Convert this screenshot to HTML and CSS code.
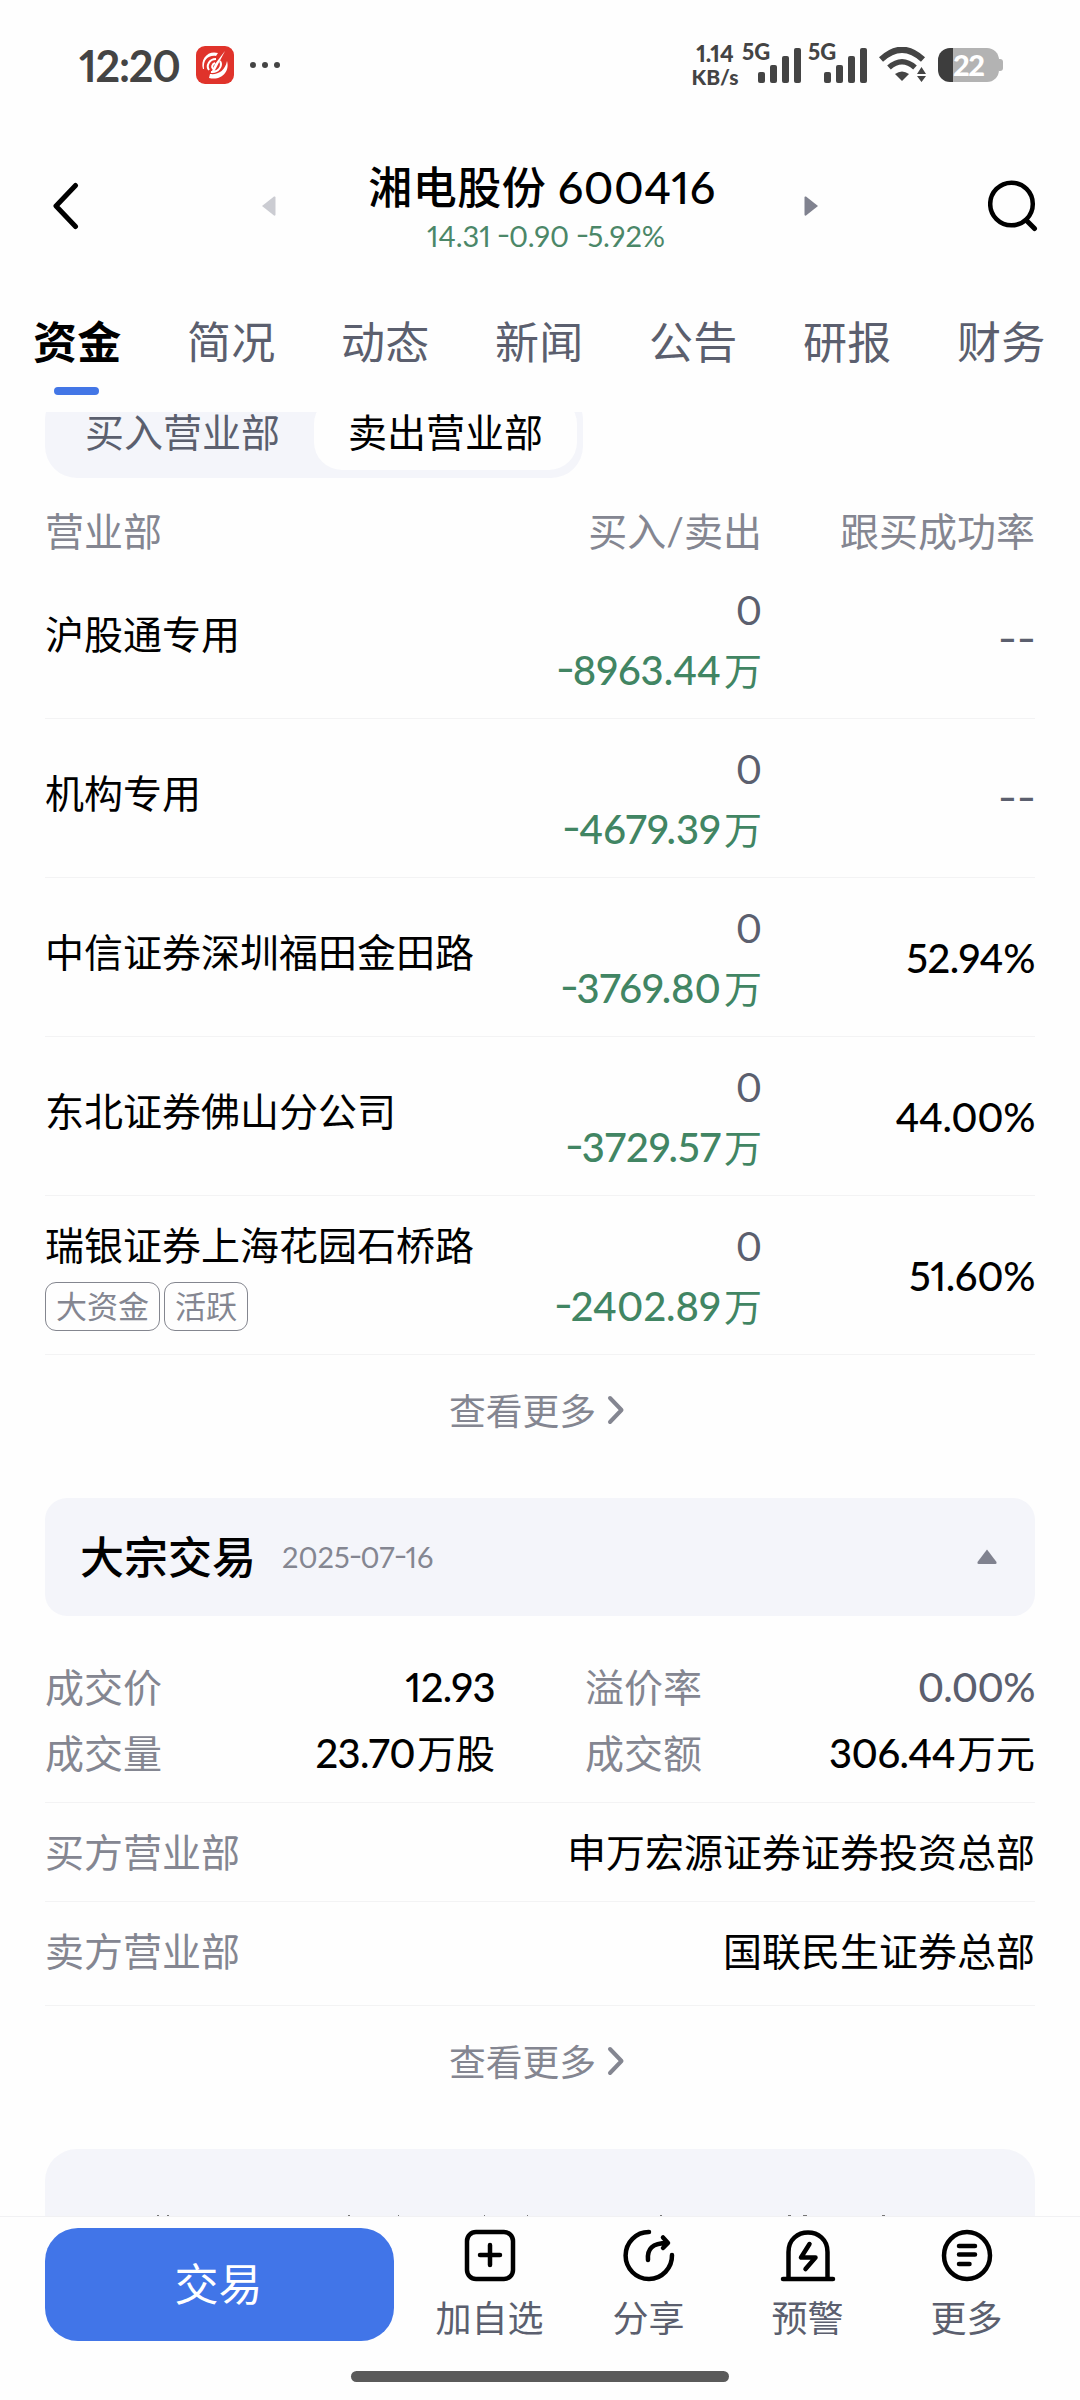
FILE: index.html
```html
<!DOCTYPE html>
<html lang="zh-CN">
<head>
  <meta charset="UTF-8" />
  <meta name="viewport" content="width=device-width, initial-scale=1" />
  <title>湘电股份 600416</title>
  <link rel="stylesheet" href="styles.css">
</head>
<body>
  <div class="statusbar">
    <span class="time">12:20</span>
    <svg class="app-logo" width="38" height="38" viewBox="0 0 38 38">
      <rect width="38" height="38" rx="9" fill="#e0332b" />
      <path d="M7 23C4 13 12 4 22 7L20 10C12 9 7 14 8 23Z" fill="#fff" />
      <path d="M31 15C34 25 26 35 13 32L14 28C22 29 29 25 31 15Z" fill="#fff" />
      <path d="M29 5L18 26L16 25L19 18Z" fill="#fff" />
      <path d="M20 13C13 13 10 20 13 24M24 15C27 20 22 27 15 26M19 17C16 18 15 22 18 23" fill="none" stroke="#fff" stroke-width="2" />
    </svg>
    <span class="dots"><i></i><i></i><i></i></span>
    <div class="status-right">
      <div class="speed"><b>1.14</b><b>KB/s</b></div>
      <div class="signal">
        <b>5G</b>
        <svg width="44" height="35" viewBox="0 0 44 35" fill="#444">
          <rect x="0" y="24" width="7" height="11" rx="2" />
          <rect x="12" y="17" width="7" height="18" rx="2" />
          <rect x="24" y="8" width="7" height="27" rx="2" />
          <rect x="36" y="0" width="7" height="35" rx="2" />
        </svg>
      </div>
      <div class="signal">
        <b>5G</b>
        <svg width="44" height="35" viewBox="0 0 44 35" fill="#444">
          <rect x="0" y="24" width="7" height="11" rx="2" />
          <rect x="12" y="17" width="7" height="18" rx="2" />
          <rect x="24" y="8" width="7" height="27" rx="2" />
          <rect x="36" y="0" width="7" height="35" rx="2" />
        </svg>
      </div>
      <svg class="wifi" width="48" height="36" viewBox="0 0 48 36">
        <path d="M2 12.500Q23 -7 44 12.500" fill="none" stroke="#444" stroke-width="6" />
        <path d="M10 20.500Q23 9 36 20.500" fill="none" stroke="#444" stroke-width="5.500" />
        <path d="M16 27Q23 22 30 27L23 34Z" fill="#444" />
        <path d="M42.500 20L47 27H38ZM42.500 35L47 29H38Z" fill="#444" />
      </svg>
      <div class="battery"><span>22</span></div>
    </div>
  </div>

  <header class="header">
    <svg class="back" width="26" height="48" viewBox="0 0 26 48">
      <path d="M22.500 3.500L3 24L22.500 44.500" fill="none" stroke="#000" stroke-width="5" stroke-linecap="round" stroke-linejoin="round" />
    </svg>
    <svg width="14" height="20" viewBox="0 0 14 20"><path d="M0 10L12 0.500Q13.500 0 13.500 1.500V18.500Q13.500 20 12 19.500Z" fill="#cbccd2" /></svg>
    <div class="title">
      <h1>湘电股份 <span>600416</span></h1>
      <p>14.31 <i>-</i>0.90 <i>-</i>5.92%</p>
    </div>
    <svg width="14" height="20" viewBox="0 0 14 20"><path d="M14 10L2 0.500Q0.500 0 0.500 1.500V18.500Q0.500 20 2 19.500Z" fill="#80828f" /></svg>
    <svg class="search" width="50" height="52" viewBox="0 0 50 52">
      <circle cx="23.500" cy="24" r="21.300" fill="none" stroke="#000" stroke-width="4.500" />
      <path d="M38.500 40.500L46.500 48.500" stroke="#000" stroke-width="5" stroke-linecap="round" />
    </svg>
  </header>

  <nav class="tabs">
    <a class="active">资金</a>
    <a>简况</a>
    <a>动态</a>
    <a>新闻</a>
    <a>公告</a>
    <a>研报</a>
    <a>财务</a>
  </nav>

  <main class="content">
    <div class="segment">
      <span>买入营业部</span>
      <span class="on">卖出营业部</span>
    </div>

    <div class="row row-head">
      <span>营业部</span>
      <span>买入/卖出</span>
      <span>跟买成功率</span>
    </div>
    <div class="row">
      <div class="name">沪股通专用</div>
      <div class="amount"><span>0</span><em><i>-</i>8963.44<u>万</u></em></div>
      <div class="rate none"><i>-</i><i>-</i></div>
    </div>
    <div class="row">
      <div class="name">机构专用</div>
      <div class="amount"><span>0</span><em><i>-</i>4679.39<u>万</u></em></div>
      <div class="rate none"><i>-</i><i>-</i></div>
    </div>
    <div class="row">
      <div class="name">中信证券深圳福田金田路</div>
      <div class="amount"><span>0</span><em><i>-</i>3769.80<u>万</u></em></div>
      <div class="rate">52.94%</div>
    </div>
    <div class="row">
      <div class="name">东北证券佛山分公司</div>
      <div class="amount"><span>0</span><em><i>-</i>3729.57<u>万</u></em></div>
      <div class="rate">44.00%</div>
    </div>
    <div class="row">
      <div class="name tagged">瑞银证券上海花园石桥路
        <div class="tags"><span>大资金</span><span>活跃</span></div>
      </div>
      <div class="amount"><span>0</span><em><i>-</i>2402.89<u>万</u></em></div>
      <div class="rate">51.60%</div>
    </div>
    <div class="more"><span>查看更多</span>
      <svg width="18" height="30" viewBox="0 0 18 30"><path d="M3 3L14.500 15L3 27" fill="none" stroke="#848691" stroke-width="4" stroke-linecap="round" stroke-linejoin="round" /></svg>
    </div>

    <div class="card-head">
      <h2>大宗交易</h2>
      <span class="date">2025<i>-</i>07<i>-</i>16</span>
      <svg width="20" height="16" viewBox="0 0 20 16"><path d="M10 0.500L19.500 13Q20 15 18.500 15H1.500Q0 15 0.500 13Z" fill="#80828f" /></svg>
    </div>
    <div class="stats">
      <div><label>成交价</label><span>12.93</span></div>
      <div><label>溢价率</label><span class="flat">0.00%</span></div>
      <div><label>成交量</label><span>23.70<u>万股</u></span></div>
      <div><label>成交额</label><span>306.44<u>万元</u></span></div>
    </div>
    <div class="party"><label>买方营业部</label><span>申万宏源证券证券投资总部</span></div>
    <div class="party last"><label>卖方营业部</label><span>国联民生证券总部</span></div>
    <div class="more"><span>查看更多</span>
      <svg width="18" height="30" viewBox="0 0 18 30"><path d="M3 3L14.500 15L3 27" fill="none" stroke="#848691" stroke-width="4" stroke-linecap="round" stroke-linejoin="round" /></svg>
    </div>

    <!-- next card, only its top edge shows above the action bar -->
    <div class="next-card">
      <svg width="990" height="2" viewBox="0 0 990 2">
        <path d="M112 1h2M122 1h2M303 1h2M353 1h1M439 1h1M482 1h1M615 1h2M743 1h3M758 1h4M837 1h3" stroke="#777" stroke-width="2" />
      </svg>
    </div>
  </main>

  <footer class="actionbar">
    <button>交易</button>
    <div class="action">
      <svg width="54" height="54" viewBox="0 0 54 54" fill="none" stroke="#000" stroke-width="4.500" stroke-linecap="round">
        <rect x="4" y="4" width="46" height="47" rx="9" />
        <path d="M27 17V37M17 27H37" />
      </svg>
      <span>加自选</span>
    </div>
    <div class="action">
      <svg width="54" height="54" viewBox="0 0 54 54" fill="none" stroke="#000" stroke-width="4.500" stroke-linecap="round" stroke-linejoin="round">
        <path d="M27 4A23.200 23.500 0 1 0 50 27" />
        <path d="M26 32C25 21 30 15 45.500 15M41 9.500L46 15L41 20" />
      </svg>
      <span>分享</span>
    </div>
    <div class="action">
      <svg width="58" height="54" viewBox="0 0 58 54" fill="none" stroke="#000" stroke-width="4.500" stroke-linecap="round" stroke-linejoin="round">
        <path d="M4 51H54M9.500 51V24C9.500 -2 48.500 -2 48.500 24V51" />
        <path d="M30.500 16L22 29.500H36.500L26.500 41" />
      </svg>
      <span>预警</span>
    </div>
    <div class="action">
      <svg width="54" height="54" viewBox="0 0 54 54" fill="none" stroke="#000" stroke-width="4.500" stroke-linecap="round">
        <ellipse cx="27" cy="27.500" rx="23" ry="23.500" />
        <path d="M19 18H35M19 26.500H35M19 36H29.500" />
      </svg>
      <span>更多</span>
    </div>
    <div class="home"></div>
  </footer>
</body>
</html>
```

FILE: styles.css
```css
* {
  box-sizing: border-box;
}
body {
  margin: 0;
  width: 1080px;
  height: 2400px;
  overflow: hidden;
  display: flex;
  flex-direction: column;
  background: #fefefe;
  color: #000;
  font-family: Lato, "Noto Sans CJK SC", sans-serif;
  font-size: 39px;
  font-variant-numeric: proportional-nums;
}
h1, h2, p {
  margin: 0;
  font-weight: 500;
}
i, em {
  font-style: normal;
}
u {
  text-decoration: none;
  font-weight: 400;
}
svg {
  display: block;
  flex: none;
}

/* wide, slightly raised minus sign */
p i, em i, .date i, .none i {
  display: inline-block;
  transform: translateY(-2px) scaleX(1.3);
}

/* status bar */
.statusbar {
  height: 130px;
  flex: none;
  display: flex;
  align-items: center;
  padding: 0 81px 0 79px;
  color: #444;
}
.time {
  width: 117px;
  font-size: 43px;
  font-weight: bold;
  letter-spacing: -1.2px;
}
.dots {
  display: flex;
  gap: 6px;
  margin-left: 16px;
}
.dots i {
  width: 6px;
  height: 6px;
  border-radius: 50%;
  background: #444;
}
.status-right {
  display: flex;
  align-items: center;
  margin-left: auto;
}
.speed {
  width: 48px;
  display: flex;
  flex-direction: column;
  align-items: center;
  margin-right: 3px;
  font-size: 21px;
  line-height: 23px;
}
.speed b:first-child {
  font-size: 23px;
}
.speed b,
.signal b {
  font-weight: 900;
}
.signal {
  display: flex;
  align-items: flex-end;
}
.signal b {
  width: 28px;
  margin-right: -12px;
  font-size: 22px;
  line-height: 24px;
  align-self: flex-start;
  margin-top: -8px;
}
.signal + .signal {
  margin-left: 6px;
}
.wifi {
  margin-left: 11px;
}
.battery {
  position: relative;
  width: 61px;
  height: 34px;
  margin-left: 11px;
  border-radius: 12px;
  background: linear-gradient(to right, #3d3d3d 15px, #b3b3b3 15px);
  color: #fff;
  font-size: 29px;
  font-weight: 900;
  line-height: 34px;
  padding-left: 15px;
  letter-spacing: -1.5px;
}
.battery::after {
  content: "";
  position: absolute;
  right: -4px;
  top: 11px;
  width: 4px;
  height: 12px;
  border-radius: 0 3px 3px 0;
  background: #b3b3b3;
}

/* title */
.header {
  height: 152px;
  flex: none;
  display: flex;
  align-items: center;
  padding: 0 42px 0 53px;
}
.back {
  margin-right: 183px;
}
.title {
  flex: 1;
  text-align: center;
}
.title h1 {
  font-size: 44px;
  line-height: 58px;
  padding: 2px 0 0 4px;
  letter-spacing: 0.5px;
}
.title h1 span {
  font-size: 45px;
}
.title p {
  padding: 0 0 0 12px;
  font-size: 29px;
  font-weight: 400;
  line-height: 40px;
  color: #4b8768;
}
.search {
  margin-left: 170px;
}

/* tabs */
.tabs {
  height: 130px;
  flex: none;
  display: flex;
  gap: 65.4px;
  padding: 25px 0 0 33px;
}
.tabs a {
  font-size: 44px;
  line-height: 70px;
  color: #5b5f6e;
  letter-spacing: 0.3px;
}
.tabs .active {
  position: relative;
  color: #000;
  font-weight: bold;
}
.active::after {
  content: "";
  position: absolute;
  left: 21px;
  top: 80px;
  width: 45px;
  height: 8px;
  border-radius: 4px;
  background: #4376e6;
}

.content {
  flex: 1;
  overflow: hidden;
  padding: 0 45px;
}
.segment {
  width: 538px;
  height: 90px;
  margin-top: -24px;
  padding: 8px 6px 8px 6px;
  display: flex;
  border-radius: 32px;
  background: #f4f5fa;
  line-height: 73px;
  text-align: center;
  color: #5b5f6e;
}
.segment span {
  flex: 1;
}
.segment .on {
  flex: none;
  width: 263px;
  border-radius: 28px;
  background: #fefefe;
  color: #000;
}

/* broker table */
.row {
  height: 159px;
  display: grid;
  grid-template-columns: 450px 267px 1fr;
  align-items: center;
  border-bottom: 1px solid #f3f3f4;
}
.row-head {
  height: 82px;
  padding-top: 19px;
  border: 0;
  color: #848691;
}
.row-head span + span,
.rate,
.amount {
  text-align: right;
}
.name {
  padding-bottom: 15px;
}
.tagged {
  padding: 2px 0 0;
  line-height: 48px;
}
.tags {
  display: flex;
  gap: 4px;
  margin-top: 13px;
}
.tags span {
  height: 49px;
  padding: 0 10px;
  border: 1px solid #84868f;
  border-radius: 11px;
  font-size: 31px;
  line-height: 47px;
  color: #848691;
}
.amount {
  display: flex;
  flex-direction: column;
  padding-top: 2px;
  font-size: 40px;
  line-height: 60px;
}
.amount span {
  font-size: 40px;
  color: #5b5f6e;
}
.amount em {
  color: #418563;
  font-weight: 500;
}
.amount u {
  margin-left: 3px;
  font-size: 38px;
}
.rate {
  padding-top: 2px;
  font-size: 40px;
  font-weight: 500;
  letter-spacing: -0.4px;
}
.none {
  color: #5b5f6e;
}
.none i {
  margin-right: 2px;
  margin-left: 2px;
}
.more {
  height: 143px;
  padding: 0 18px 33px 12px;
  display: flex;
  align-items: center;
  justify-content: center;
  gap: 11px;
  font-size: 36.8px;
  color: #848691;
}
.more span {
  padding-bottom: 2px;
}

/* block trades */
.card-head {
  height: 118px;
  display: flex;
  align-items: center;
  padding: 0 38px 0 35px;
  border-radius: 22px;
  background: #f4f5fa;
}
.card-head h2 {
  padding-bottom: 5px;
  font-size: 44px;
}
.date {
  flex: 1;
  margin-left: 26px;
  padding-bottom: 1px;
  font-size: 29px;
  color: #848691;
}
.stats {
  display: grid;
  grid-template-columns: 1fr 1fr;
  grid-auto-rows: 66px;
  align-content: start;
  column-gap: 90px;
  height: 187px;
  padding-top: 38px;
  border-bottom: 1px solid #f3f3f4;
}
.stats div {
  display: flex;
  justify-content: space-between;
  line-height: 66px;
}
label {
  color: #848691;
}
.stats span {
  font-size: 40px;
  font-weight: 500;
  letter-spacing: -0.6px;
}
.stats u {
  margin-left: 2px;
  font-size: 39px;
  letter-spacing: 0;
}
.stats .flat {
  color: #5b5f6e;
}
.party {
  height: 99px;
  padding-bottom: 5px;
  display: flex;
  align-items: center;
  justify-content: space-between;
  border-bottom: 1px solid #f3f3f4;
}
.party.last {
  height: 104px;
  padding-bottom: 10px;
}
.next-card {
  height: 200px;
  padding-top: 66px;
  border-radius: 32px;
  background: #f4f5fa;
}

/* bottom bar */
.actionbar {
  position: relative;
  height: 184px;
  flex: none;
  display: flex;
  padding: 11px 34px 0 45px;
  border-top: 1px solid #f1f1f3;
}
.actionbar button {
  width: 349px;
  height: 113px;
  margin-right: 16px;
  padding: 0 2px 6px 0;
  border: 0;
  border-radius: 33px;
  background: #4175e8;
  color: #fff;
  font: inherit;
  font-size: 44px;
}
.action {
  width: 159px;
  display: flex;
  flex-direction: column;
  align-items: center;
  font-size: 36px;
  line-height: 50px;
  color: #5b5f6e;
}
.action span {
  margin-top: 11px;
}
.home {
  position: absolute;
  left: 351px;
  bottom: 18px;
  width: 378px;
  height: 11px;
  border-radius: 6px;
  background: #5a5a5a;
}
```
